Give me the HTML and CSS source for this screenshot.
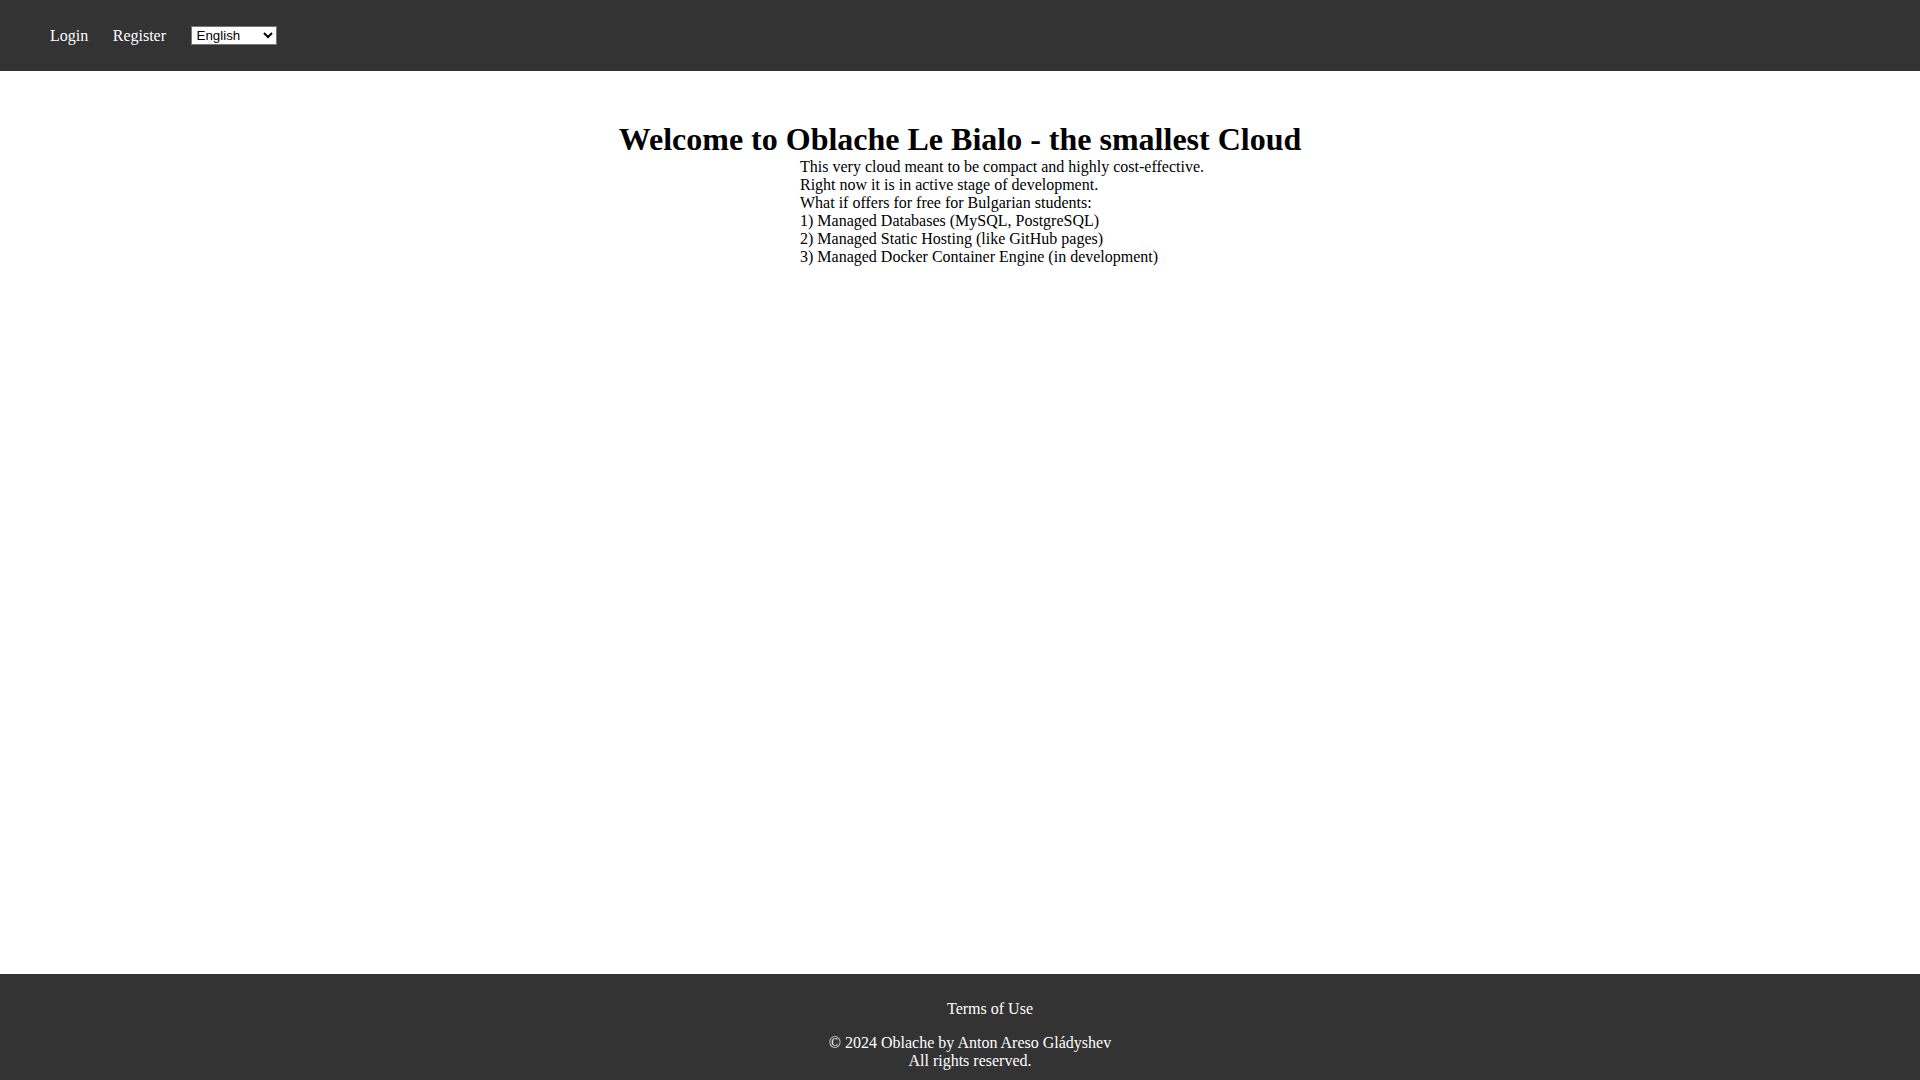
FILE: index.html
```html
<!DOCTYPE html>
<html lang="en">
<head>
<meta charset="utf-8">
<title>Oblache Le Bialo</title>
<link rel="stylesheet" href="styles.css">
</head>
<body>
<header class="topbar">
  <nav class="nav">
    <a class="nav-link" href="#">Login</a>
    <a class="nav-link" href="#">Register</a>
    <select class="lang-select">
      <option>English</option>
      <option>Bulgarian</option>
    </select>
  </nav>
</header>
<main class="main">
  <h1 class="title">Welcome to Oblache Le Bialo - the smallest Cloud</h1>
  <p class="intro">This very cloud meant to be compact and highly cost-effective.<br>Right now it is in active stage of development.<br>What if offers for free for Bulgarian students:<br>1) Managed Databases (MySQL, PostgreSQL)<br>2) Managed Static Hosting (like GitHub pages)<br>3) Managed Docker Container Engine (in development)</p>
</main>
<footer class="footer">
  <div class="footer-links"><a class="footer-link" href="#">Terms of Use</a></div>
  <p class="copyright">© 2024 Oblache by Anton Areso Gládyshev<br>All rights reserved.</p>
</footer>
</body>
</html>
```

FILE: styles.css
```css
html, body {
  margin: 0;
  padding: 0;
}
body {
  font-family: "Liberation Serif", "Times New Roman", serif;
  font-size: 16px;
  color: #000;
  background: #fff;
  min-height: 100vh;
  display: flex;
  flex-direction: column;
}
.topbar {
  background: #333333;
  height: 71px;
  display: flex;
  align-items: center;
}
.nav {
  display: flex;
  align-items: center;
  gap: 24.5px;
  padding-left: 50px;
}
.nav-link {
  color: #fff;
  text-decoration: none;
}
.lang-select {
  font-family: "Liberation Sans", Arial, sans-serif;
  font-size: 13.333px;
  width: 86px;
  height: 19px;
  margin: 0;
  padding: 0 0 0 1px;
  background: #fff;
  color: #000;
  border: 1px solid #767676;
  border-radius: 0;
}
.main {
  flex: 1;
  padding-top: 49.6px;
}
.title {
  font-size: 32px;
  font-weight: bold;
  text-align: center;
  margin: 0;
}
.intro {
  text-align: left;
  margin: 0;
  padding-left: calc(50% - 160px);
  white-space: nowrap;
}
.footer {
  background: #333333;
  color: #fff;
  height: 106px;
  box-sizing: border-box;
  padding: 26px 0 0 20px;
  text-align: center;
}
.footer-links {
  padding-left: 40px;
  margin-bottom: 15.6px;
}
.footer-link {
  color: #fff;
  text-decoration: none;
}
.copyright {
  margin: 0;
}
```
